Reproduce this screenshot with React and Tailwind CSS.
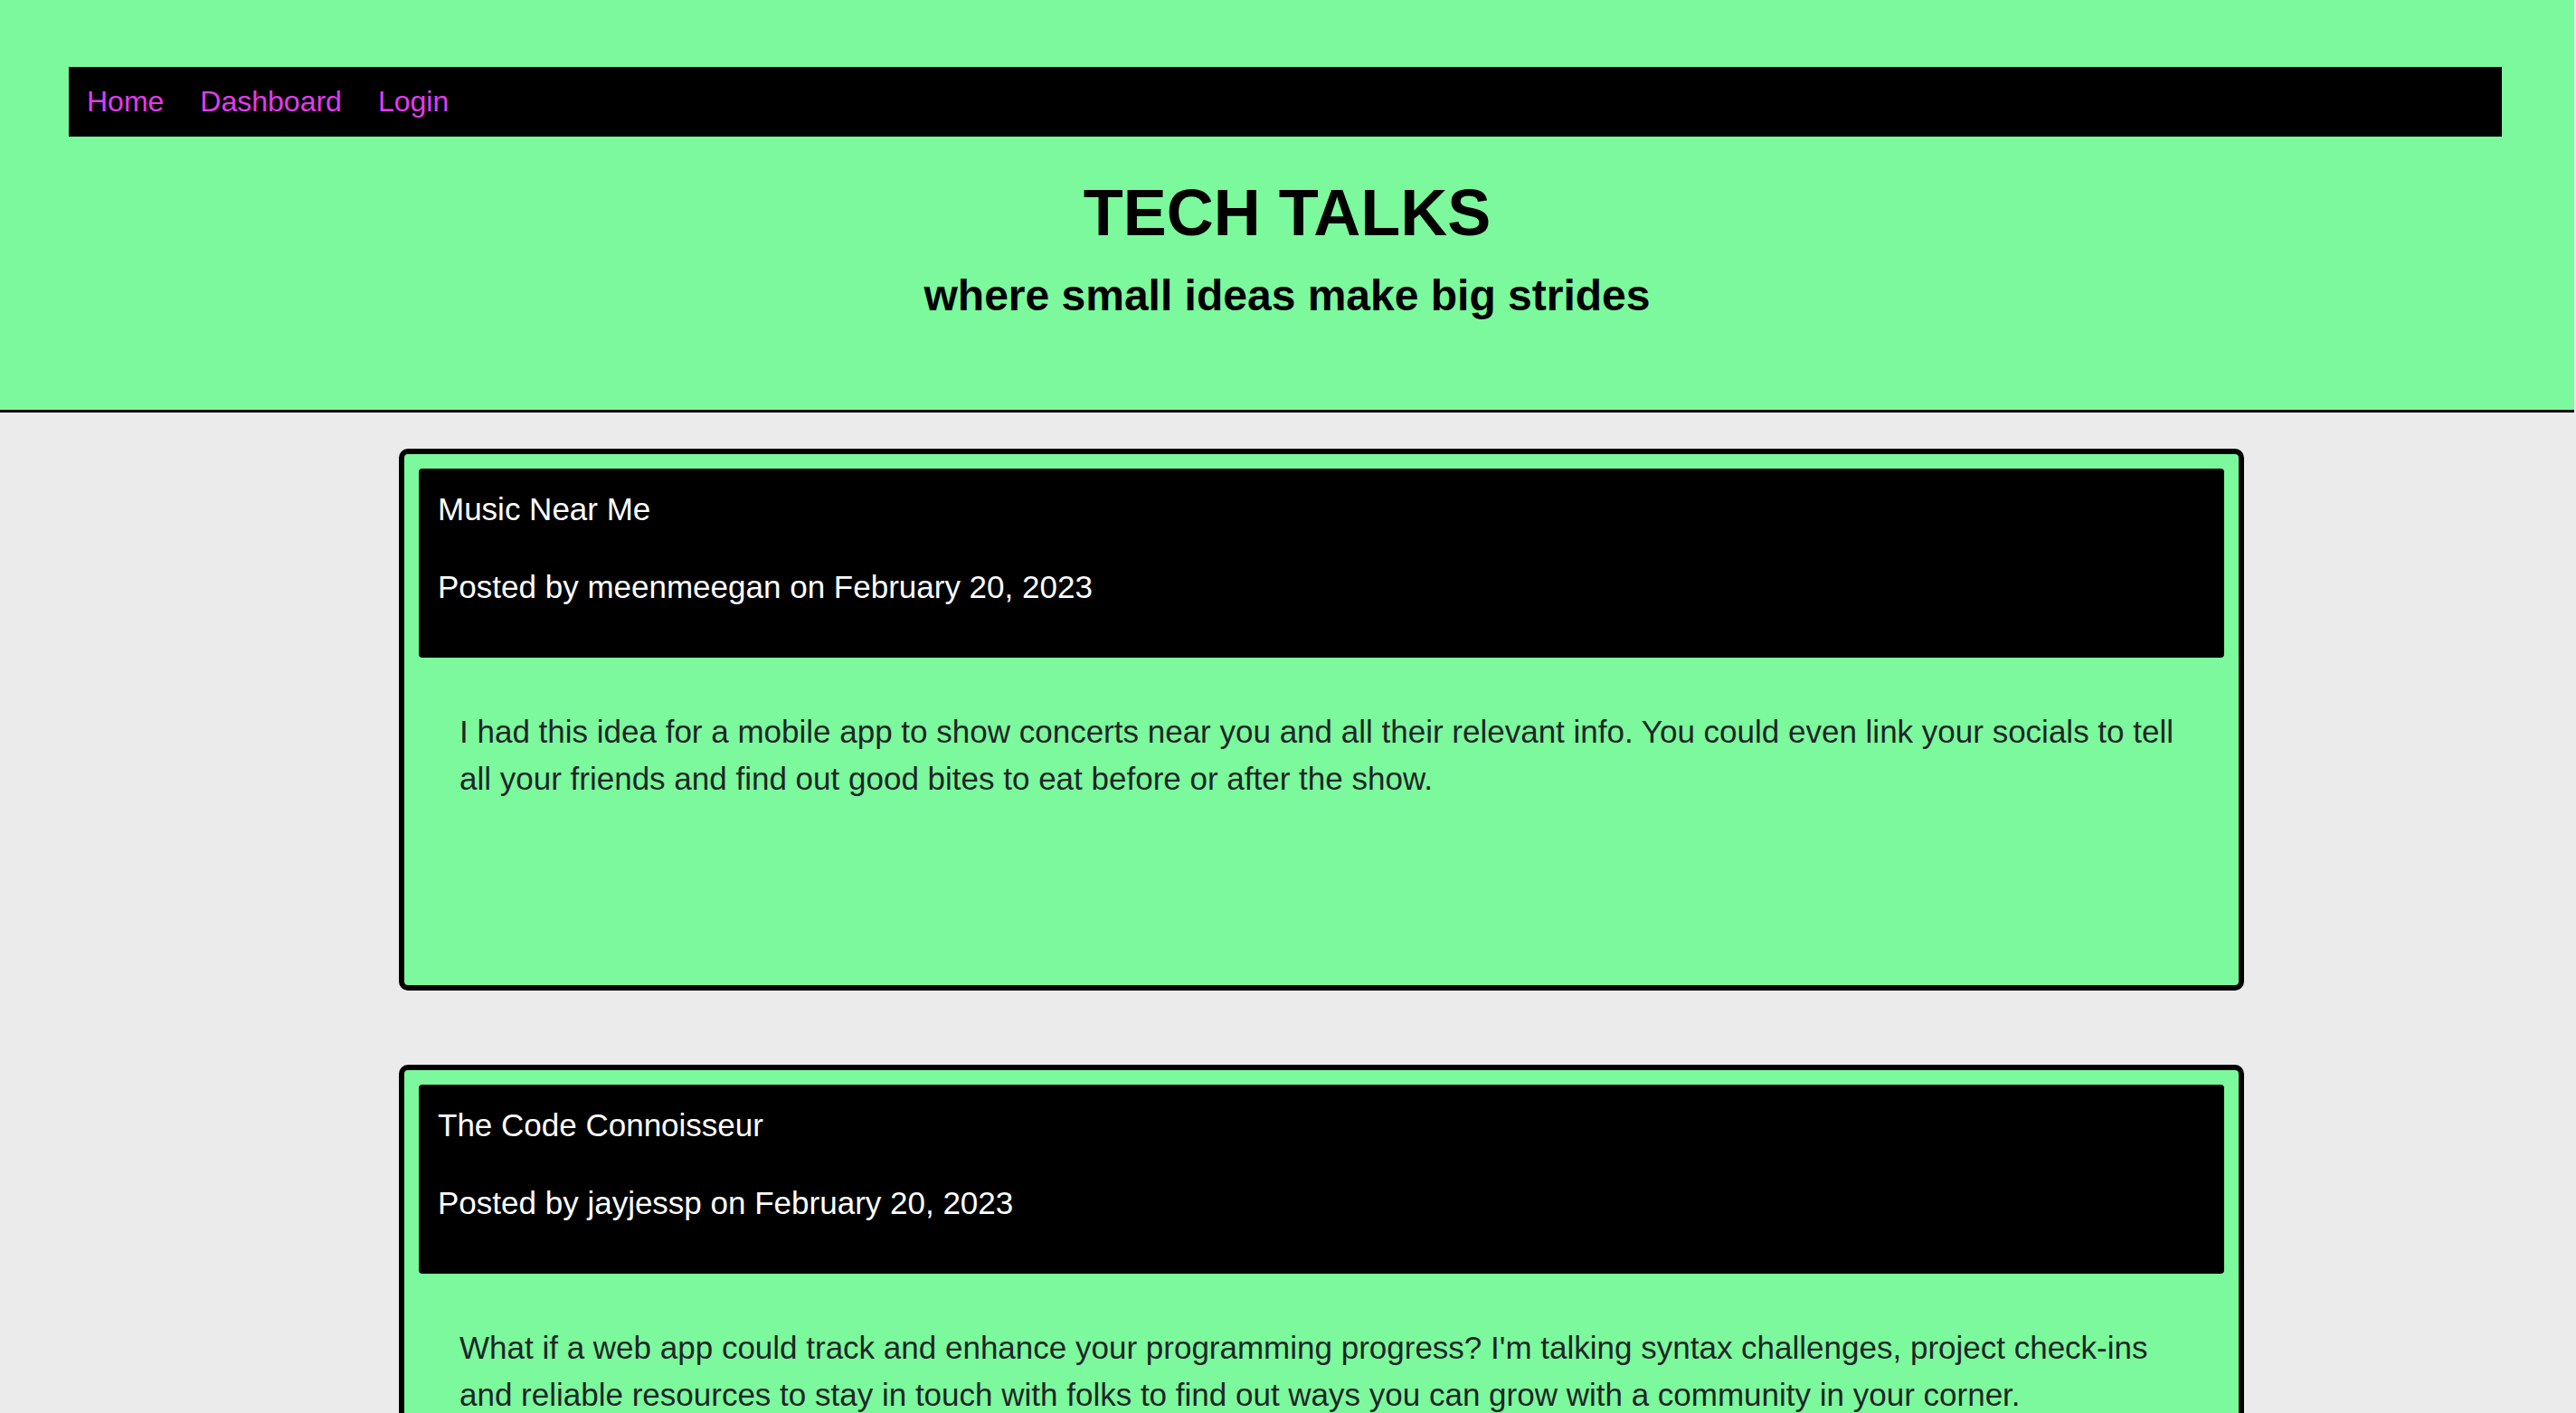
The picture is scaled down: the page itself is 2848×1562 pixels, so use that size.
const posts = [
  {
    title: "Music Near Me",
    author: "meenmeegan",
    date: "February 20, 2023",
    body: "I had this idea for a mobile app to show concerts near you and all their relevant info. You could even link your socials to tell all your friends and find out good bites to eat before or after the show.",
  },
  {
    title: "The Code Connoisseur",
    author: "jayjessp",
    date: "February 20, 2023",
    body: "What if a web app could track and enhance your programming progress? I'm talking syntax challenges, project check-ins and reliable resources to stay in touch with folks to find out ways you can grow with a community in your corner.",
  },
];

// Nav link in the top bar
const NavLink = ({ children }) => (
  <a href="#" className="px-[20px] text-[32px] leading-[37px] text-[#e33bef]">
    {children}
  </a>
);

// One post card
const PostCard = ({ post }) => (
  <article className="w-[2040px] min-h-[599px] bg-[#7bf99c] border-[6px] border-black rounded-[10px] p-[16px]">
    <div className="bg-black rounded-[4px] px-[21px] pt-[25px] pb-[58px] text-white text-[35px] leading-[40px]">
      <h3>{post.title}</h3>
      <p className="mt-[46px]">
        Posted by {post.author} on {post.date}
      </p>
    </div>
    <p className="pt-[56px] pl-[45px] pr-[40px] text-[35px] leading-[52px] text-[#212529]">
      {post.body}
    </p>
  </article>
);

const App = () => {
  return (
    <div className="min-h-screen bg-[#ebebeb] font-['Liberation_Sans',Arial,sans-serif]">
      <div className="w-[2846px]">
        <header className="h-[456px] bg-[#7bf99c] border-b-[3px] border-black pt-[74px]">
          <nav className="ml-[76px] mr-[80px] h-[77px] bg-black flex items-center">
            <NavLink>Home</NavLink>
            <NavLink>Dashboard</NavLink>
            <NavLink>Login</NavLink>
          </nav>
          <h1 className="mt-[44px] text-center font-bold text-[72px] leading-[80px] text-black">
            TECH TALKS
          </h1>
          <h2 className="mt-[24px] text-center font-bold text-[48px] leading-[55px] text-black">
            where small ideas make big strides
          </h2>
        </header>

        <main className="pt-[40px] pb-[80px] pl-[441px] flex flex-col gap-[82px]">
          {posts.map((post) => (
            <PostCard key={post.title} post={post} />
          ))}
        </main>
      </div>
    </div>
  );
};

export default App;
